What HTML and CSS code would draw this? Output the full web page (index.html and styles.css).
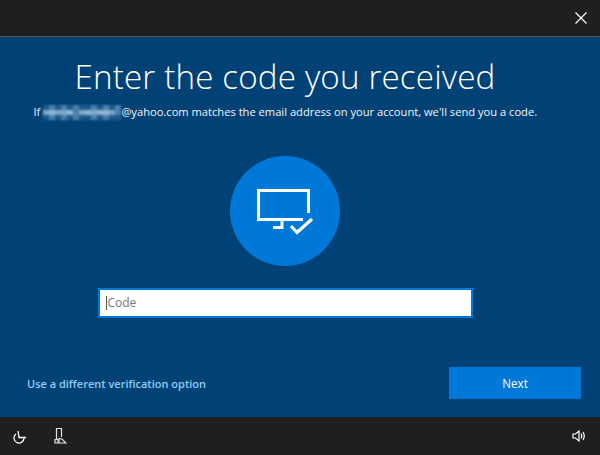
FILE: index.html
```html
<!DOCTYPE html>
<html lang="en">
<head>
<meta charset="utf-8">
<title>Enter the code you received</title>
<link rel="stylesheet" href="styles.css">
</head>
<body>
<div class="app">
  <header class="topbar">
    <svg class="close" width="14" height="14" viewBox="0 0 14 14"><path d="M1.500 1.500L12.500 12.500M12.500 1.500L1.500 12.500" stroke="#fff" stroke-width="1.200" fill="none"/></svg>
  </header>
  <main class="main">
    <div class="stack">
      <h1 class="title">Enter the code you received</h1>
      <p class="sub">If <span class="blur"><i class="b3"></i><i class="b1"></i><i class="b3"></i><i class="b1"></i><i class="b3"></i><i class="b1"></i><i class="b3"></i><i class="b3"></i><i class="b1"></i><i class="b3"></i><i class="b1"></i><i class="b3"></i><i class="b1"></i><i class="b2"></i><i class="b4"></i><i class="b2"></i><i class="b2"></i><i class="b4"></i><i class="b1"></i><i class="b2"></i><i class="b4"></i><i class="b2"></i><i class="b4"></i><i class="b4"></i><i class="b2"></i><i class="b1"></i><i class="b3"></i><i class="b1"></i><i class="b3"></i><i class="b1"></i><i class="b3"></i><i class="b1"></i><i class="b3"></i><i class="b3"></i><i class="b1"></i><i class="b3"></i><i class="b1"></i><i class="b3"></i><i class="b3"></i></span>@yahoo.com matches the email address on your account, we'll send you a code.</p>
      <div class="badge">
        <svg width="60" height="48" viewBox="0 0 60 48" fill="none" stroke="#fff" stroke-width="3">
          <path d="M53.500 26V3.500H3.500V32.500H48"/>
          <path d="M27 32.500V40.500H18"/>
          <path d="M36 39L42 45.500L57 32" stroke-width="3.200"/>
        </svg>
      </div>
      <div class="field"><span class="caret"></span><span class="placeholder">Code</span></div>
    </div>
    <div class="actions">
      <a class="link">Use a different verification option</a>
      <button class="next">Next</button>
    </div>
  </main>
  <footer class="bottombar">
    <div class="left-icons">
      <svg width="16" height="16" viewBox="0 0 16 16" fill="none" stroke="#fff" stroke-width="1.300"><path d="M5 6A5 5 0 1 0 13 10"/><path d="M7 3L8 9.500H15"/></svg>
      <svg width="14" height="18" viewBox="0 0 14 18" fill="none" stroke="#dfe3e6" stroke-width="1.200"><path d="M3.500 12V1.500H8.500V10"/><path d="M2 12.500H5V16H2Z"/><path d="M6 16V11.500L9 12L13 16H6Z"/></svg>
    </div>
    <svg width="14" height="14" viewBox="0 0 14 14" fill="none" stroke="#fff" stroke-width="1.200"><path d="M1 5H3.500L7 2V12L3.500 9H1Z"/><path d="M9 4.500Q10.500 7 9 9.500M11 3Q13.500 7 11 11"/></svg>
  </footer>
</div>
</body>
</html>
```
FILE: styles.css
```css
* { box-sizing: border-box; }
html, body { margin: 0; padding: 0; }
body { font-family: "Open Sans", "Noto Sans", sans-serif; background: #1f1f1f; }
.app { width: 600px; height: 455px; display: flex; flex-direction: column; overflow: hidden; }
.topbar {
  height: 37px; flex: none; background: #1f1f1f; border-bottom: 1px solid #5c5850;
  display: flex; justify-content: flex-end; align-items: center; padding: 0 12px 0 0;
}
.close { display: block; }
.main { flex: 1; background: #004275; color: #fff; display: flex; flex-direction: column; min-height: 0; }
.stack { width: 570px; display: flex; flex-direction: column; align-items: center; }
.title {
  margin: 17px 0 0; font-weight: 300; font-size: 33.200px; line-height: 46px; letter-spacing: 0.15px; white-space: nowrap;
}
.sub {
  margin: 3px 0 0; font-size: 11.150px; line-height: 18px; white-space: nowrap; color: #f2f6f9; display: flex; align-items: center; width: 503px;
}
.blur { display: grid; grid-template-columns: repeat(13, 6px); grid-auto-rows: 5px; width: 78px; height: 15px; margin-left: 3px; filter: blur(1px); }
.blur i { display: block; }
.b1 { background: #4b81ac; }
.b2 { background: #7fa8c8; }
.b3 { background: #1f5a8c; }
.b4 { background: #94b6d1; }
.badge {
  width: 110px; height: 110px; border-radius: 50%; background: #0078d7; margin-top: 35px; flex: none;
  display: flex; align-items: center; justify-content: center;
}
.field {
  width: 375px; height: 30px; margin-top: 22px; background: #fff; border: 2px solid #0078d7; flex: none;
  display: flex; align-items: center; padding-left: 6px; font-size: 12px; color: #777;
}
.caret { width: 1px; height: 14px; background: #555; margin-right: 1px; }
.placeholder { line-height: 16px; }
.actions {
  display: flex; justify-content: space-between; align-items: center;
  margin-top: 49px; padding: 0 19px 0 27px;
}
.link { font-size: 11px; font-weight: 600; color: #8fcdf5; }
.next {
  width: 132px; height: 32px; background: #0078d7; border: 0; color: #fff; font: 500 11.700px "Open Sans", sans-serif; padding: 0;
}
.bottombar {
  height: 38px; flex: none; background: #1f1f1f; display: flex; justify-content: space-between; align-items: center;
  padding: 0 14px 0 11px;
}
.left-icons { display: flex; align-items: center; gap: 26px; }
```
